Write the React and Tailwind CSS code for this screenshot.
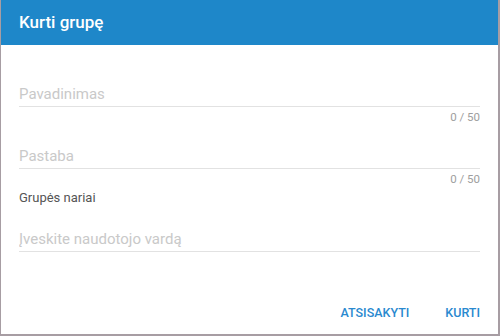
import React, { useState } from 'react';

const Field = ({ placeholder, value, onChange, className }) => (
  <div className={`h-[24px] border-b border-[#e2e2e2] flex items-center ${className}`}>
    <input
      value={value}
      onChange={onChange}
      placeholder={placeholder}
      className="w-full bg-transparent outline-none text-[15px] text-[#333] placeholder:text-[#c9c9c9]"
    />
  </div>
);

const App = () => {
  const [name, setName] = useState('');
  const [note, setNote] = useState('');
  const [user, setUser] = useState('');

  return (
    <div className="w-[500px] h-[336px] bg-white flex flex-col border-l border-r-2 border-b-2 border-[#a79da3] font-['Roboto',sans-serif]">
      {/* Header */}
      <div className="h-[45px] shrink-0 bg-[#1e87c9] px-[18px] flex items-center">
        <h2 className="text-white text-[17px] font-medium">Kurti grupę</h2>
      </div>

      {/* Body */}
      <div className="flex-1 flex flex-col pl-[18px] pr-[18px]">
        <Field className="mt-[38px]" placeholder="Pavadinimas" value={name} onChange={(e) => setName(e.target.value.slice(0, 50))} />
        <div className="h-[20px] leading-[20px] text-right text-[11.5px] text-[#9e9e9e]">{name.length} / 50</div>

        <Field className="mt-[18px]" placeholder="Pastaba" value={note} onChange={(e) => setNote(e.target.value.slice(0, 50))} />
        <div className="h-[20px] leading-[20px] text-right text-[11.5px] text-[#9e9e9e]">{note.length} / 50</div>

        <div className="h-[17px] leading-[17px] text-[13px] text-[#555]">Grupės nariai</div>
        <Field className="mt-[22px]" placeholder="Įveskite naudotojo vardą" value={user} onChange={(e) => setUser(e.target.value)} />

        {/* Actions */}
        <div className="mt-auto pb-[3px] flex justify-end gap-[36px]">
          <button className="h-[36px] text-[12.5px] font-medium text-[#2a89cf] uppercase">Atsisakyti</button>
          <button className="h-[36px] text-[12.5px] font-medium text-[#2a89cf] uppercase">Kurti</button>
        </div>
      </div>
    </div>
  );
};

export default App;
